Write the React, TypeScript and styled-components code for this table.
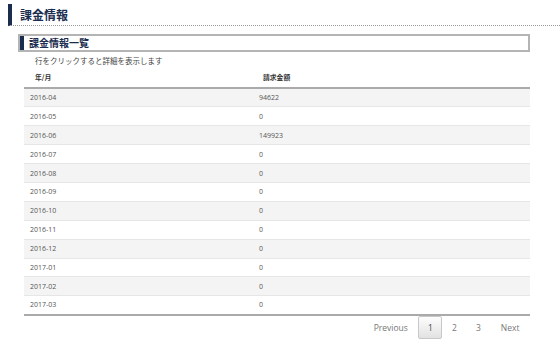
import React from "react";
import styled, { createGlobalStyle } from "styled-components";

const Global = createGlobalStyle`
  html, body { margin: 0; padding: 0; background: #fff; }
  body { font-family: "Open Sans", "Noto Sans CJK JP", sans-serif; }
`;

const Page = styled.div`
  width: 560px;
  height: 347px;
  padding: 4px 0 0 8px;
  box-sizing: border-box;
  overflow: hidden;
`;

const Title = styled.h1`
  margin: 0;
  height: 21px;
  border-left: 4px solid #1b2d4f;
  border-bottom: 1px dotted #9a9a9a;
  padding-left: 8px;
  font-size: 12px;
  font-weight: bold;
  line-height: 21px;
  color: #1b2d4f;
  font-family: "Noto Sans CJK JP", sans-serif;
`;

const Section = styled.div`
  margin: 8px 0 0 10px;
  width: 512px;
`;

const SubTitle = styled.h2`
  margin: 0;
  height: 18px;
  box-sizing: border-box;
  border: 2px solid #b4b4b4;
  display: flex;
  align-items: stretch;
  font-size: 10px;
  font-weight: bold;
  color: #1b2d4f;
  font-family: "Noto Sans CJK JP", sans-serif;
`;

const SubBar = styled.span`
  width: 4px;
  background: #1b2d4f;
  margin-right: 5px;
`;

const SubText = styled.span`
  line-height: 14px;
`;

const Note = styled.p`
  margin: 3px 0 0 17px;
  font-size: 7.5px;
  line-height: 11px;
  color: #444;
  font-family: "Noto Sans CJK JP", sans-serif;
`;

const Table = styled.table`
  margin: 0 0 0 6px;
  width: 506px;
  border-collapse: collapse;
  border-bottom: 2px solid #aaa;
  font-family: "Open Sans", "Noto Sans CJK JP", sans-serif;
`;

const Th = styled.th<{ $pad: number }>`
  text-align: left;
  height: 21px;
  padding: 0 0 0 ${(p) => p.$pad}px;
  font-size: 6.8px;
  font-weight: bold;
  color: #333;
  border-bottom: 2px solid #aaa;
  vertical-align: middle;
  font-family: "Noto Sans CJK JP", sans-serif;
`;

const Tr = styled.tr<{ $odd: boolean }>`
  height: 18.9px;
  background: ${(p) => (p.$odd ? "#f4f4f4" : "#fff")};
  border-top: 1px solid #e6e6e6;
`;

const Td = styled.td<{ $w?: number }>`
  padding: 0 0 0 6px;
  font-size: 7px;
  color: #555;
  vertical-align: middle;
  ${(p) => (p.$w ? `width: ${p.$w}px;` : "")}
`;

const Pager = styled.div`
  width: 506px;
  margin: 0 0 0 6px;
  display: flex;
  justify-content: flex-end;
`;

const PageBtn = styled.span<{ $active?: boolean; $digit?: boolean }>`
  display: flex;
  align-items: center;
  justify-content: center;
  box-sizing: border-box;
  height: 23px;
  padding: 0 ${(p) => (p.$digit ? 0 : 9.5)}px;
  ${(p) => (p.$digit ? "width: 24px;" : "")}
  font-size: 8.5px;
  color: #777;
  border: 1px solid ${(p) => (p.$active ? "#c8c8c8" : "transparent")};
  border-radius: 2px;
  background: ${(p) =>
    p.$active ? "linear-gradient(#fdfdfd, #e2e2e2)" : "transparent"};
  ${(p) => (p.$active ? "color: #444;" : "")}
`;

const rows: [string, string][] = [
  ["2016-04", "94622"],
  ["2016-05", "0"],
  ["2016-06", "149923"],
  ["2016-07", "0"],
  ["2016-08", "0"],
  ["2016-09", "0"],
  ["2016-10", "0"],
  ["2016-11", "0"],
  ["2016-12", "0"],
  ["2017-01", "0"],
  ["2017-02", "0"],
  ["2017-03", "0"],
];

export default function App() {
  return (
    <Page>
      <Global />
      <Title>課金情報</Title>
      <Section>
        <SubTitle>
          <SubBar />
          <SubText>課金情報一覧</SubText>
        </SubTitle>
        <Note>行をクリックすると詳細を表示します</Note>
        <Table>
          <thead>
            <tr>
              <Th $pad={11}>年/月</Th>
              <Th $pad={10}>請求金額</Th>
            </tr>
          </thead>
          <tbody>
            {rows.map(([m, v], i) => (
              <Tr key={m} $odd={i % 2 === 0}>
                <Td $w={223}>{m}</Td>
                <Td>{v}</Td>
              </Tr>
            ))}
          </tbody>
        </Table>
        <Pager>
          <PageBtn>Previous</PageBtn>
          <PageBtn $active $digit>1</PageBtn>
          <PageBtn $digit>2</PageBtn>
          <PageBtn $digit>3</PageBtn>
          <PageBtn>Next</PageBtn>
        </Pager>
      </Section>
    </Page>
  );
}
